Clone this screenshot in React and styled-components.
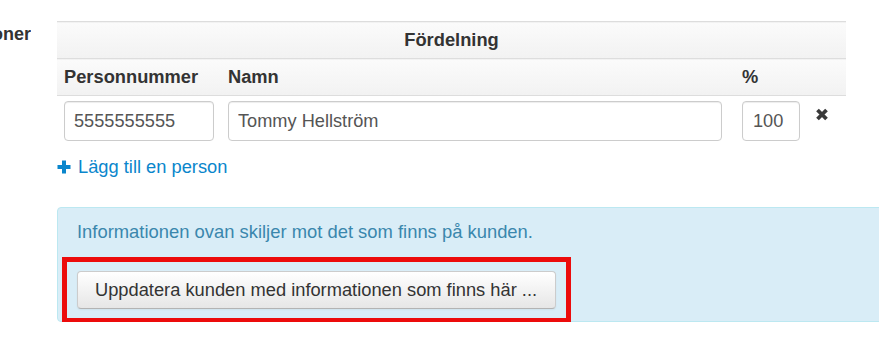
import React from "react";
import styled, { createGlobalStyle } from "styled-components";

const GlobalStyle = createGlobalStyle`
  body {
    margin: 0;
    overflow: hidden;
    background: #fff;
    font-family: "Liberation Sans", Arial, sans-serif;
    color: #333;
  }
`;

function RemoveIcon() {
  return (
    <svg width="14" height="13" viewBox="0 0 14 13">
      <path d="M2.5 2 L11.5 11 M11.5 2 L2.5 11" stroke="#3a3a3a" strokeWidth="3.8" strokeLinecap="butt" />
    </svg>
  );
}

function PlusIcon() {
  return (
    <svg width="14" height="14" viewBox="0 0 14 14">
      <path d="M7 0.5 V13.5 M0.5 7 H13.5" stroke="currentColor" strokeWidth="4" />
    </svg>
  );
}

function App() {
  return (
    <>
      <GlobalStyle />
      <Page>
        <LabelCol>
          <Label>Personer</Label>
        </LabelCol>
        <Content>
          <Table>
            <colgroup>
              <col style={{ width: 164 }} />
              <col style={{ width: 514 }} />
              <col style={{ width: 73 }} />
              <col style={{ width: 38 }} />
            </colgroup>
            <thead>
              <HeadRow>
                <GroupTh colSpan={4}>Fördelning</GroupTh>
              </HeadRow>
              <HeadRow>
                <Th>Personnummer</Th>
                <Th>Namn</Th>
                <Th>%</Th>
                <Th />
              </HeadRow>
            </thead>
            <tbody>
              <tr>
                <Td>
                  <Input defaultValue="5555555555" $width={150} />
                </Td>
                <Td>
                  <Input defaultValue="Tommy Hellström" $width={494} />
                </Td>
                <Td>
                  <Input defaultValue="100" $width={58} $pad={10} />
                </Td>
                <Td>
                  <RemoveButton>
                    <RemoveIcon />
                  </RemoveButton>
                </Td>
              </tr>
            </tbody>
          </Table>

          <AddLink href="#">
            <PlusIcon />
            Lägg till en person
          </AddLink>

          <Alert>
            <AlertText>Informationen ovan skiljer mot det som finns på kunden.</AlertText>
            <Highlight>
              <Button>Uppdatera kunden med informationen som finns här ...</Button>
            </Highlight>
          </Alert>
        </Content>
      </Page>
    </>
  );
}

const Page = styled.div`
  display: flex;
  padding-top: 21px;
`;

const LabelCol = styled.div`
  width: 31px;
  flex-shrink: 0;
  margin-right: 26px;
  display: flex;
  justify-content: flex-end;
  overflow: hidden;
  padding-top: 2px;
`;

const Label = styled.span`
  font-weight: bold;
  font-size: 18px;
  line-height: 22px;
  white-space: nowrap;
  color: #333;
`;

const Content = styled.div`
  width: 789px;
  flex-shrink: 0;
`;

const Table = styled.table`
  width: 789px;
  table-layout: fixed;
  border-collapse: collapse;
  border-spacing: 0;
`;

const HeadRow = styled.tr`
  background: linear-gradient(#fbfbfb, #f2f2f2);
  border-top: 1px solid #dddddd;
  border-bottom: 1px solid #dddddd;
`;

const GroupTh = styled.th`
  height: 36px;
  padding: 0 7px;
  text-align: center;
  font-size: 18.3px;
  font-weight: bold;
  color: #333;
`;

const Th = styled.th`
  height: 36px;
  padding: 0 7px;
  text-align: left;
  font-size: 18.3px;
  font-weight: bold;
  color: #333;
`;

const Td = styled.td`
  padding: 5px 7px 0;
  vertical-align: top;
`;

const Input = styled.input`
  box-sizing: border-box;
  width: ${(p) => p.$width}px;
  height: 40px;
  padding: 0 ${(p) => p.$pad || 9}px;
  border: 1px solid #cccccc;
  border-radius: 4px;
  box-shadow: inset 0 1px 1px rgba(0, 0, 0, 0.075);
  font-family: "Liberation Sans", Arial, sans-serif;
  font-size: 18.2px;
  color: #555;
  background: #fff;
  outline: none;
`;

const RemoveButton = styled.span`
  display: block;
  padding-top: 7px;
  line-height: 0;
`;

const AddLink = styled.a`
  display: inline-flex;
  align-items: center;
  gap: 7px;
  margin-top: 15px;
  font-size: 18.3px;
  line-height: 22px;
  color: #0a86cc;
  text-decoration: none;
`;

const Alert = styled.div`
  width: 840px;
  box-sizing: border-box;
  margin-top: 29px;
  padding: 13px 19px 0;
  background: #d9edf7;
  border: 1px solid #bce8f1;
  border-radius: 4px;
`;

const AlertText = styled.p`
  margin: 0 0 14px;
  font-size: 18.4px;
  line-height: 22px;
  color: #3a87ad;
`;

const Highlight = styled.div`
  width: 509px;
  box-sizing: border-box;
  margin: 0 0 -2px -15px;
  padding: 9px 10px;
  border: 5px solid #ec0c0c;
  position: relative;
`;

const Button = styled.button`
  display: block;
  width: 479px;
  height: 38px;
  padding: 0 12px 0 17px;
  background: linear-gradient(#ffffff, #e6e6e6);
  border: 1px solid #cccccc;
  border-bottom-color: #b3b3b3;
  border-radius: 4px;
  box-shadow: inset 0 1px 0 rgba(255, 255, 255, 0.2), 0 1px 2px rgba(0, 0, 0, 0.05);
  font-family: "Liberation Sans", Arial, sans-serif;
  font-size: 18.3px;
  color: #333;
  text-align: left;
  cursor: pointer;
`;

export default App;
